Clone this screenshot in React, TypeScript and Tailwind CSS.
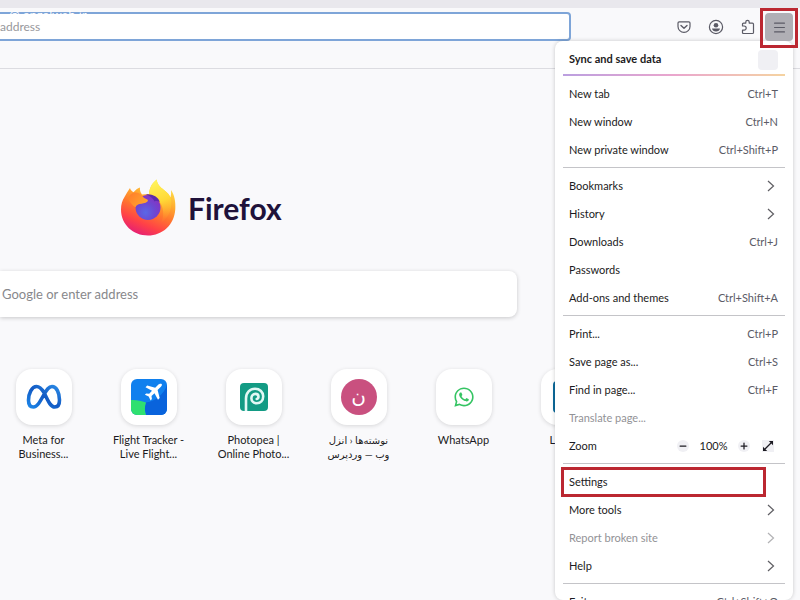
import { useId, type ReactNode } from "react";
import { Menu, Minus, Plus } from "lucide-react";
import { FaWhatsapp } from "react-icons/fa";

type MenuEntry = {
  label: string;
  shortcut?: string;
  submenu?: boolean;
  disabled?: boolean;
};

const tabItems: MenuEntry[] = [
  { label: "New tab", shortcut: "Ctrl+T" },
  { label: "New window", shortcut: "Ctrl+N" },
  { label: "New private window", shortcut: "Ctrl+Shift+P" },
];

const libraryItems: MenuEntry[] = [
  { label: "Bookmarks", submenu: true },
  { label: "History", submenu: true },
  { label: "Downloads", shortcut: "Ctrl+J" },
  { label: "Passwords" },
  { label: "Add-ons and themes", shortcut: "Ctrl+Shift+A" },
];

const pageItems: MenuEntry[] = [
  { label: "Print...", shortcut: "Ctrl+P" },
  { label: "Save page as...", shortcut: "Ctrl+S" },
  { label: "Find in page...", shortcut: "Ctrl+F" },
  { label: "Translate page...", disabled: true },
];

const toolItems: MenuEntry[] = [
  { label: "More tools", submenu: true },
  { label: "Report broken site", submenu: true, disabled: true },
  { label: "Help", submenu: true },
];

function PocketIcon() {
  return (
    <svg viewBox="0 0 14 14" className="size-[14px]" fill="none" stroke="currentColor" strokeWidth="1.2" strokeLinecap="round" strokeLinejoin="round">
      <path d="M2.2 1.8h9.6a1.2 1.2 0 0 1 1.2 1.2v3.4a6 5.9 0 0 1-12 0V3a1.2 1.2 0 0 1 1.2-1.2Z" />
      <path d="m4 5.4 3 2.8 3-2.8" strokeWidth="1.4" />
    </svg>
  );
}

function AccountIcon() {
  return (
    <svg viewBox="0 0 16 16" className="size-4" fill="none" stroke="currentColor">
      <circle cx="8" cy="8" r="6.6" strokeWidth="1.2" />
      <circle cx="8" cy="6.2" r="2.3" fill="currentColor" stroke="none" />
      <path d="M4 9.6h8c-.3 1.9-1.9 3-4 3s-3.7-1.1-4-3Z" fill="currentColor" stroke="none" />
    </svg>
  );
}

function ExtensionsIcon() {
  return (
    <svg viewBox="0 0 14 16" className="h-4 w-[14px]" fill="none" stroke="currentColor" strokeWidth="1.2" strokeLinejoin="round">
      <path d="M1.5 7V5.2c0-.7.4-1.1 1.1-1.1h2.2V3a1.7 1.7 0 0 1 3.4 0v1.1h3.2c.7 0 1.1.4 1.1 1.1v8.2c0 .7-.4 1.1-1.1 1.1H2.6c-.7 0-1.1-.4-1.1-1.1v-2.2h1.6a1.9 1.9 0 0 0 0-4.2Z" />
    </svg>
  );
}

function FirefoxLogo() {
  const id = useId();
  return (
    <svg viewBox="0 0 56 58" className="h-[58px] w-14" aria-hidden="true">
      <defs>
        <linearGradient id={`${id}-body`} x1="0.8" y1="0.1" x2="0.4" y2="1">
          <stop offset="0" stopColor="#ffe14a" />
          <stop offset="0.3" stopColor="#ffac2f" />
          <stop offset="0.55" stopColor="#ff752e" />
          <stop offset="0.8" stopColor="#ff4147" />
          <stop offset="1" stopColor="#e8236f" />
        </linearGradient>
        <linearGradient id={`${id}-flame`} x1="0.4" y1="0" x2="0.6" y2="1">
          <stop offset="0" stopColor="#fff45a" />
          <stop offset="0.5" stopColor="#ffd936" />
          <stop offset="1" stopColor="#ffa02c" stopOpacity="0" />
        </linearGradient>
        <radialGradient id={`${id}-globe`} cx="0.4" cy="0.7" r="0.75">
          <stop offset="0" stopColor="#5a68e6" />
          <stop offset="0.5" stopColor="#6c48d2" />
          <stop offset="1" stopColor="#8a2fc0" />
        </radialGradient>
        <linearGradient id={`${id}-head`} x1="0" y1="0" x2="1" y2="0.6">
          <stop offset="0" stopColor="#ff7a2b" />
          <stop offset="1" stopColor="#ffa52d" />
        </linearGradient>
      </defs>
      <path
        d="M10 9c.4 1.700 1.500 3 3.500 4.200C15.500 11 17.500 9.200 20 8.500c-.3 2.500.2 4.800 2 7l7-.5C29.500 9 32 4 36.700.5c.3 4.500 3.300 7.500 7.300 10.500 3.500 2.500 5.500 5 6.500 7.500.6-2.500.8-5 .5-7.500 3.500 5 4.800 12 4.300 19C54.300 46 42.500 56.500 28 56.500 13 56.500 1 45.500 1 30.500c0-5 1.200-9 3.500-12.500C6 15 8 12 10 9Z"
        fill={`url(#${id}-body)`}
      />
      <path
        d="M29 15C29.500 9 32 4 36.700.5c.3 4.500 3.300 7.500 7.300 10.500 3.500 2.500 5.500 5 6.500 7.500C53 27 50 38 41 44c3-6 3-13 0-19-2.500-5-7-8.500-12-10Z"
        fill={`url(#${id}-flame)`}
      />
      <circle cx="28" cy="28.500" r="12.500" fill={`url(#${id}-globe)`} />
      <path
        d="M8 19c2-3.500 4.500-5.500 7-5.500 3 0 5.500 1.200 7 3.300 1.500 2 3 3 5.200 3.700.8.3.9 1.200.3 1.900-2.300 2.200-5.500 1.900-8 2.600-2.200.7-3.200 1.600-4 3.200-3-1.500-6-5-7.500-9.200Z"
        fill={`url(#${id}-head)`}
      />
      <path d="M26 15.400c6-.6 12.500 2.600 13.800 7.600-2-1.200-3.800-1.300-5.300-.6-1.500-3-4-5.500-8.500-7Z" fill="#5b2cab" />
    </svg>
  );
}

function MetaIcon() {
  const id = useId();
  return (
    <svg viewBox="0 0 36 26" className="h-[26px] w-9" fill="none">
      <linearGradient id={id} x1="0" y1="1" x2="1" y2="0">
        <stop offset="0" stopColor="#1d86e8" />
        <stop offset="0.5" stopColor="#1259c3" />
        <stop offset="1" stopColor="#2a8ae6" />
      </linearGradient>
      <path
        d="M18 8.500C15.500 4.500 13.300 2.500 10.600 2.500 5.800 2.500 2.500 9.500 2.500 16.200c0 4.200 1.800 6.800 4.900 6.800 3.600 0 5.800-3.800 10.600-12.500C20.800 5.500 22.800 2.500 26 2.500c4.600 0 7.500 6.500 7.500 13.500 0 4.500-1.700 7-4.700 7-3.800 0-6-4.200-10.800-14.500Z"
        stroke={`url(#${id})`}
        strokeWidth="3.600"
        strokeLinejoin="round"
      />
    </svg>
  );
}

function FlightIcon() {
  const id = useId();
  return (
    <svg viewBox="0 0 36 36" className="size-9">
      <clipPath id={`${id}-clip`}>
        <rect width="36" height="36" rx="6" />
      </clipPath>
      <g clipPath={`url(#${id}-clip)`}>
        <rect width="36" height="36" fill="#1080ee" />
        <path d="M15 23.500C13.500 27 13.500 32 15 36h21V6c-3 9-11 16-21 17.500Z" fill="#0963dc" />
        <path d="M0 21c5-.3 10 .5 15 2.500-1.500 4-1.500 8.500 0 12.500H0Z" fill="#2fe070" />
      </g>
      <path
        d="M30.800 5.200c-1-.9-2.900-.2-4.100 1l-2.500 2.500-8-2.100-1.700 1.700 6.500 3.500-2.800 3-3-.4-1.300 1.300 3.800 1.900 1.900 3.800 1.300-1.300-.4-3 3-2.800 3.500 6.500 1.700-1.700-2.100-8 2.500-2.500c1.200-1.200 2.300-2.700 1.700-3.400Z"
        fill="#fff"
      />
    </svg>
  );
}

function PhotopeaIcon() {
  return (
    <svg viewBox="0 0 28 28" className="size-7">
      <rect width="28" height="28" rx="4" fill="#139b84" />
      <path
        d="M6 28V15.500C6 9.500 10 5.800 15 5.800c4.900 0 8.200 3.200 8.200 7.500 0 4.200-2.800 6.900-6.400 6.900-3.200 0-5.400-2.100-5.400-4.900 0-2.600 1.800-4.400 4-4.400 1.900 0 3.100 1.200 3.100 2.800 0 1.200-.8 2-1.800 2.200"
        fill="none"
        stroke="#e2f8f5"
        strokeWidth="2.600"
        strokeLinecap="round"
      />
    </svg>
  );
}

function ChevronIcon() {
  return (
    <svg viewBox="0 0 8 12" className="mr-[3px] h-3 w-2 opacity-70" fill="none" stroke="currentColor" strokeWidth="1.2">
      <path d="m1 1 5.500 5L1 11" />
    </svg>
  );
}

function FullscreenIcon() {
  return (
    <svg viewBox="0 0 12 12" className="size-3" stroke="currentColor" fill="currentColor">
      <path d="m3 9 6-6" strokeWidth="1.300" />
      <path d="M6.800 1H11v4.200ZM1 6.800V11h4.200Z" stroke="none" />
    </svg>
  );
}

function Separator() {
  return <hr className="mx-2 mt-1 mb-[3px] h-px shrink-0 border-0 bg-[#c4c4c8]" />;
}

function MenuRow({ label, shortcut, submenu, disabled }: MenuEntry) {
  return (
    <button
      type="button"
      role="menuitem"
      disabled={disabled}
      className="flex h-7 w-full shrink-0 items-center justify-between pt-[2px] pr-[15px] pl-[14px] text-left text-[#1c1b22] disabled:text-[#929296]"
    >
      <span>{label}</span>
      {shortcut ? <span className="text-[#5b5b66]">{shortcut}</span> : null}
      {submenu ? <ChevronIcon /> : null}
    </button>
  );
}

function AppMenu() {
  return (
    <div
      role="menu"
      className="absolute top-[41px] right-[7px] bottom-0 flex w-[238px] flex-col overflow-hidden rounded-lg bg-white text-[11px] shadow-[0_0_4px_rgba(0,0,0,0.2)]"
    >
      <div className="flex h-[33px] shrink-0 items-center justify-between pt-1 pr-[15px] pl-[14px]">
        <span className="font-bold text-[#1c1b22]">Sync and save data</span>
        <button type="button" aria-label="Sign in" className="size-5 rounded-sm bg-[#f0f0f4]" />
      </div>
      <div className="mx-2 mb-[3px] h-[2px] shrink-0 bg-linear-to-r from-[#bb9fe0] via-[#eaa6cd] to-[#f5d3a0]" />

      {tabItems.map((item) => (
        <MenuRow key={item.label} {...item} />
      ))}
      <Separator />
      {libraryItems.map((item) => (
        <MenuRow key={item.label} {...item} />
      ))}
      <Separator />
      {pageItems.map((item) => (
        <MenuRow key={item.label} {...item} />
      ))}
      <div className="flex h-7 shrink-0 items-center pt-[2px] pr-[19px] pl-[14px] text-[#1c1b22]">
        <span className="flex-1">Zoom</span>
        <button type="button" aria-label="Zoom out" className="flex size-3 items-center justify-center rounded-full bg-[#f0f0f4]">
          <Minus className="size-[10px]" strokeWidth={3} />
        </button>
        <span className="w-[49px] text-center">100%</span>
        <button type="button" aria-label="Zoom in" className="flex size-3 items-center justify-center rounded-full bg-[#f0f0f4]">
          <Plus className="size-[10px]" strokeWidth={3} />
        </button>
        <button type="button" aria-label="Full screen" className="ml-3 flex size-3 items-center justify-center bg-[#f0f0f4]">
          <FullscreenIcon />
        </button>
      </div>
      <Separator />
      <div className="relative shrink-0">
        <MenuRow label="Settings" />
        <div className="pointer-events-none absolute top-0 right-[27px] -bottom-[2px] left-[6px] border-3 border-[#bb2731]" />
      </div>
      {toolItems.map((item) => (
        <MenuRow key={item.label} {...item} />
      ))}
      <Separator />
      <MenuRow label="Exit" shortcut="Ctrl+Shift+Q" />
    </div>
  );
}

type ShortcutProps = {
  lines: string[];
  dir?: "ltr" | "rtl";
  labelClass?: string;
  children: ReactNode;
};

function Shortcut({ lines, dir = "ltr", labelClass = "text-center text-[11px]", children }: ShortcutProps) {
  return (
    <a href="#" className="flex w-[105px] shrink-0 flex-col items-center">
      <span className="flex size-14 items-center justify-center rounded-2xl bg-white shadow-[0_1px_4px_rgba(0,0,0,0.14)]">
        {children}
      </span>
      <span dir={dir} className={`mt-2 leading-[14px] text-[#1c1b22] ${labelClass}`}>
        {lines.map((line) => (
          <span key={line} className="block whitespace-nowrap">
            {line}
          </span>
        ))}
      </span>
    </a>
  );
}

export default function App() {
  return (
    <div className="relative flex h-screen flex-col overflow-hidden bg-[#f9f9fb] font-['Lato','Noto_Sans','DejaVu_Sans',sans-serif]">
      <div className="h-2 shrink-0 bg-[#e9e8ed]" />
      <header className="flex h-[61px] shrink-0 items-start border-b border-[#dcdce1]">
        <input
          type="text"
          aria-label="Search or enter address"
          placeholder="address"
          className="mt-1 h-[29px] min-w-0 flex-1 rounded-r-sm border-2 border-l-0 border-[#7ea5d8] bg-white text-[12px] text-[#1c1b22] outline-none placeholder:text-[#98989c]"
        />
        <div className="ml-[106px] flex h-10 shrink-0 items-center text-[#5b5b66]">
          <div className="flex items-center gap-[17px] pb-[3px]">
            <button type="button" aria-label="Save to Pocket">
              <PocketIcon />
            </button>
            <button type="button" aria-label="Account">
              <AccountIcon />
            </button>
            <button type="button" aria-label="Extensions">
              <ExtensionsIcon />
            </button>
          </div>
          <div className="relative z-10 mr-[2px] ml-[5px] border-3 border-[#bb2731] px-[2px] pt-[2px] pb-1">
            <button
              type="button"
              aria-label="Open application menu"
              className="flex size-7 items-center justify-center rounded-sm bg-[#b0afb5] text-[#5b5b66]"
            >
              <Menu className="size-[15px]" strokeWidth={1.7} />
            </button>
          </div>
        </div>
      </header>
      <p className="pointer-events-none absolute top-2 left-[9px] h-[7px] overflow-hidden font-['Open_Sans'] text-[12px] leading-4 text-white">
        @ anzalweb.ir
      </p>

      <main className="flex-1">
        <div className="mt-[110px] ml-[120px] flex items-center gap-3">
          <FirefoxLogo />
          <span className="text-[30px] font-bold text-[#20123a]">Firefox</span>
        </div>
        <input
          type="text"
          aria-label="Search with Google or enter address"
          placeholder="Google or enter address"
          className="mt-[34px] h-[46px] w-[517px] rounded-r-lg bg-white pl-[2px] text-[13px] text-[#1c1b22] shadow-[0_1px_4px_rgba(0,0,0,0.2)] outline-none placeholder:text-[#88888c]"
        />
        <nav aria-label="Shortcuts" className="mt-[52px] -ml-[9px] flex">
          <Shortcut lines={["Meta for", "Business..."]}>
            <MetaIcon />
          </Shortcut>
          <Shortcut lines={["Flight Tracker -", "Live Flight..."]}>
            <FlightIcon />
          </Shortcut>
          <Shortcut lines={["Photopea |", "Online Photo..."]}>
            <PhotopeaIcon />
          </Shortcut>
          <Shortcut lines={["نوشته‌ها ‹ انزل", "وب — وردپرس"]} dir="rtl" labelClass="text-center text-[10px]">
            <span className="flex size-9 items-center justify-center rounded-full bg-[#c9507f] pb-1 text-[20px] leading-none text-white">
              ن
            </span>
          </Shortcut>
          <Shortcut lines={["WhatsApp"]}>
            <FaWhatsapp className="size-[22px] text-[#35c463]" />
          </Shortcut>
          <Shortcut lines={["L"]} labelClass="w-[38px] text-[11px]">
            <span className="size-8 rounded-sm bg-[#0d6b9c]" />
          </Shortcut>
        </nav>
      </main>

      <AppMenu />
    </div>
  );
}
